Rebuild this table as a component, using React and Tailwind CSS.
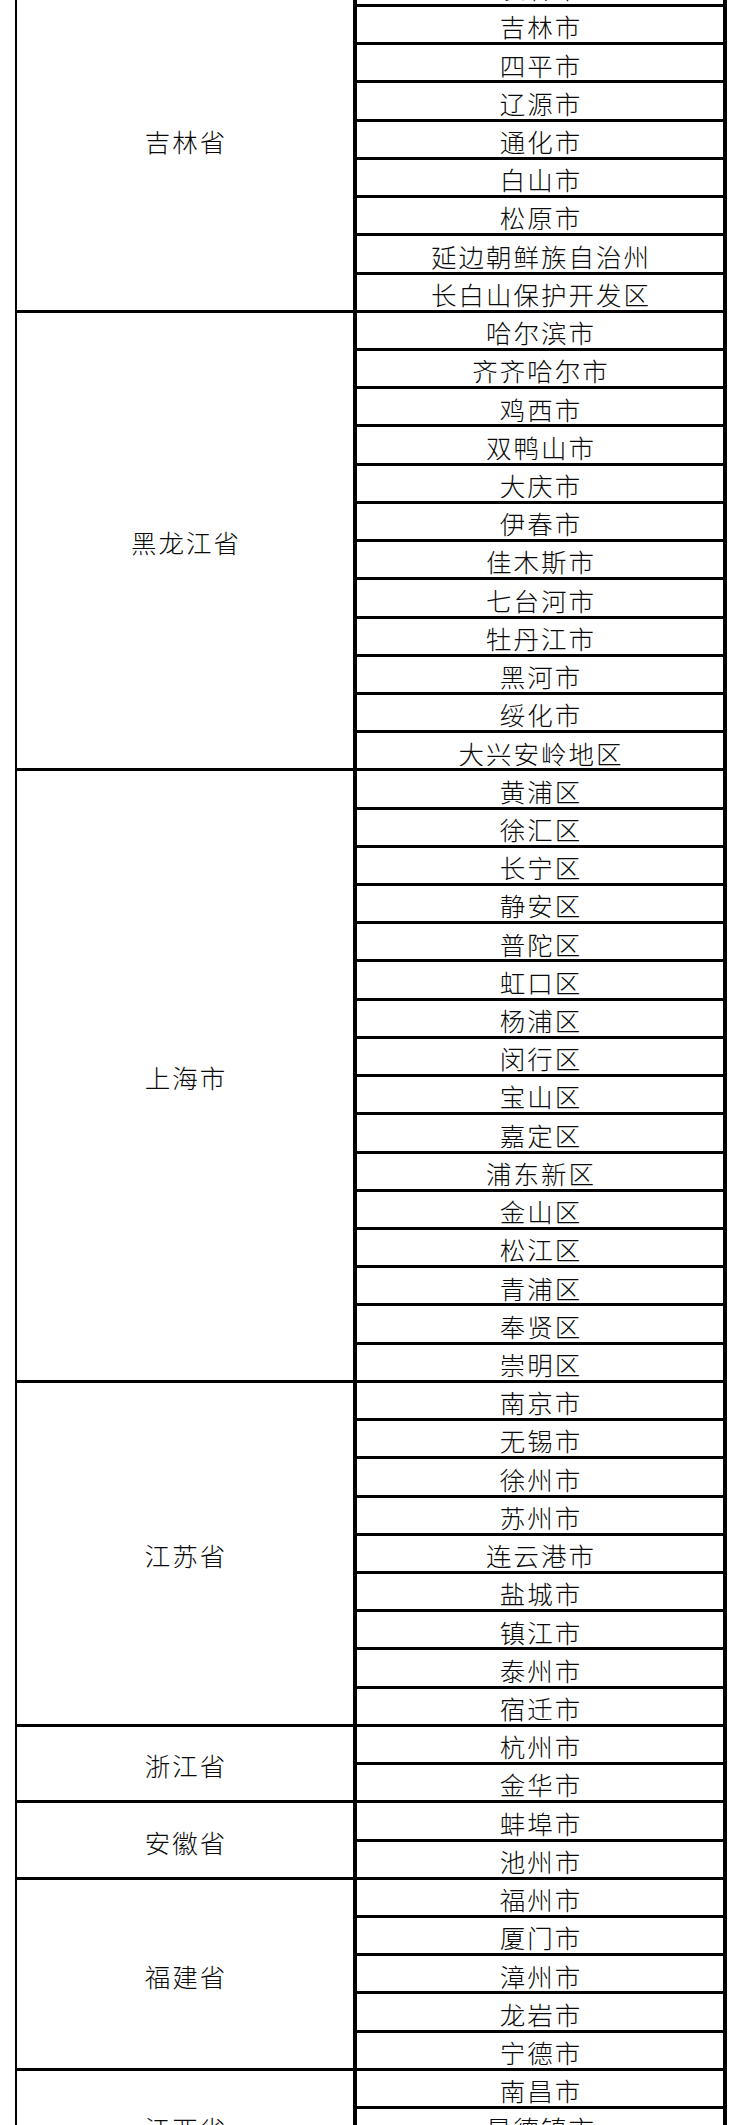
const groups = [
  {
    name: '吉林省',
    cities: ['长春市', '吉林市', '四平市', '辽源市', '通化市', '白山市', '松原市', '延边朝鲜族自治州', '长白山保护开发区'],
  },
  {
    name: '黑龙江省',
    cities: ['哈尔滨市', '齐齐哈尔市', '鸡西市', '双鸭山市', '大庆市', '伊春市', '佳木斯市', '七台河市', '牡丹江市', '黑河市', '绥化市', '大兴安岭地区'],
  },
  {
    name: '上海市',
    cities: ['黄浦区', '徐汇区', '长宁区', '静安区', '普陀区', '虹口区', '杨浦区', '闵行区', '宝山区', '嘉定区', '浦东新区', '金山区', '松江区', '青浦区', '奉贤区', '崇明区'],
  },
  {
    name: '江苏省',
    cities: ['南京市', '无锡市', '徐州市', '苏州市', '连云港市', '盐城市', '镇江市', '泰州市', '宿迁市'],
  },
  { name: '浙江省', cities: ['杭州市', '金华市'] },
  { name: '安徽省', cities: ['蚌埠市', '池州市'] },
  { name: '福建省', cities: ['福州市', '厦门市', '漳州市', '龙岩市', '宁德市'] },
  { name: '江西省', cities: ['南昌市', '景德镇市', '九江市'] },
]

function Group({ name, cities }) {
  return (
    <div className="flex border-b-[3px] border-black">
      <div className="flex w-[340px] shrink-0 items-center justify-center border-r-4 border-black pt-[3px] pl-[2px]">
        {name}
      </div>
      <div className="flex-1">
        {cities.map((c, i) => (
          <div
            key={c}
            className={
              i < cities.length - 1
                ? 'flex h-[38.22px] items-center justify-center border-b-[3px] border-black pt-[3px] pl-[2px]'
                : 'flex h-[35.22px] items-center justify-center pt-[3px] pl-[2px]'
            }
          >
            {c}
          </div>
        ))}
      </div>
    </div>
  )
}

export default function App() {
  return (
    <div
      className="h-[2125px] overflow-hidden bg-white text-[25.5px] font-light leading-none tracking-[2px] text-[#0a0a0a]"
      style={{ fontFamily: '"Noto Sans CJK SC", "Noto Sans", sans-serif' }}
    >
      <div className="ml-[15px] mt-[-31.22px] w-[712px] border-l-2 border-r-4 border-black">
        {groups.map((g) => (
          <Group key={g.name} {...g} />
        ))}
      </div>
    </div>
  )
}
